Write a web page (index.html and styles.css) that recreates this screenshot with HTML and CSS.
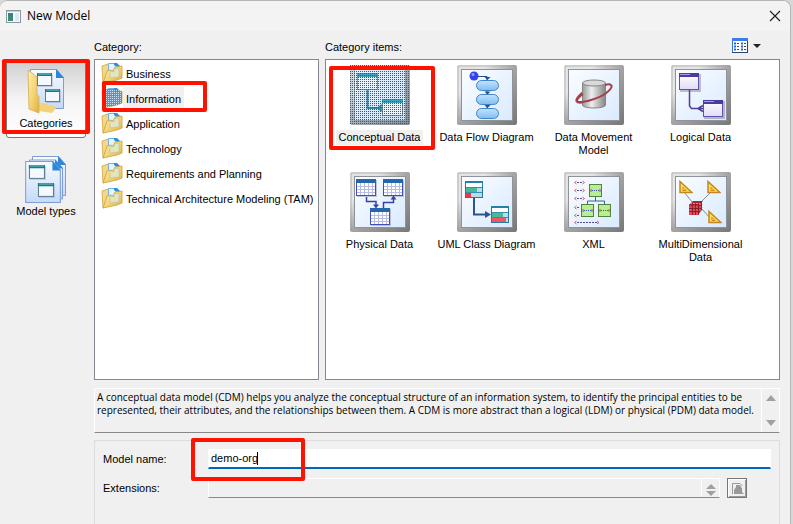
FILE: index.html
```html
<!DOCTYPE html>
<html lang="en">
<head>
<meta charset="utf-8">
<title>New Model</title>
<link rel="stylesheet" href="styles.css">
</head>
<body>
<svg class="defs" aria-hidden="true">
  <defs>
    <linearGradient id="bevel" x1="0" y1="0" x2="1" y2="1"><stop offset="0" stop-color="#e2e2e2"/><stop offset=".25" stop-color="#e6e6e6"/><stop offset=".5" stop-color="#a5a5a5"/><stop offset="1" stop-color="#777"/></linearGradient>
    <linearGradient id="sky" x1="0" y1="0" x2="1" y2="1"><stop offset="0" stop-color="#fbfdff"/><stop offset="1" stop-color="#d9eaff"/></linearGradient>
    <linearGradient id="gold" x1="0" y1="0" x2="1" y2="1"><stop offset="0" stop-color="#fff0ac"/><stop offset=".5" stop-color="#f5d677"/><stop offset="1" stop-color="#dfae42"/></linearGradient>
    <linearGradient id="page" x1="0" y1="0" x2="0" y2="1"><stop offset="0" stop-color="#f8fbff"/><stop offset="1" stop-color="#c5daf8"/></linearGradient>
    <linearGradient id="steel" x1="0" x2="1"><stop offset="0" stop-color="#9a9a9a"/><stop offset=".4" stop-color="#eee"/><stop offset="1" stop-color="#858585"/></linearGradient>
    <linearGradient id="pill" x1="0" y1="0" x2="0" y2="1"><stop offset="0" stop-color="#c2e4ff"/><stop offset="1" stop-color="#80bdf2"/></linearGradient>
    <linearGradient id="lilac" x1="0" y1="0" x2="0" y2="1"><stop offset="0" stop-color="#fff"/><stop offset="1" stop-color="#e2dcf8"/></linearGradient>
    <pattern id="dots" width="2" height="2" patternUnits="userSpaceOnUse"><path d="M0 0h2v2H0z" fill="#a9d0ef" fill-opacity=".25"/><path d="M0 0h1v1H0z" fill="#0068bd"/></pattern>
    <pattern id="holes" width="2" height="2" patternUnits="userSpaceOnUse"><path d="M0 0h2v2H0z" fill="#2b8fe0" fill-opacity=".85"/><path d="M1 1h1v1H1z" fill="#fff" fill-opacity=".7"/></pattern>
    <symbol id="frame" viewBox="0 0 60 60">
      <rect width="60" height="60" rx="2" fill="url(#bevel)"/>
      <path d="M1 59V1h58" fill="none" stroke="#999" stroke-opacity=".6"/>
      <rect x="4.500" y="4.500" width="51" height="51" fill="url(#sky)" stroke="#8d9399"/>
    </symbol>
    <symbol id="folder" viewBox="0 0 22 22">
      <path d="M1 4l6-2 3 2v14l-8 3z" fill="#f3d888" stroke="#d0a342" stroke-width=".8"/>
      <path d="M7.500 1.500h8l3 3V14h-11z" fill="#e6f3ff" stroke="#6fb2e4"/>
      <path d="M13 1h3l3 3v4l-6-5z" fill="#2f8fd8"/>
      <path d="M9 8l3 1 2-4 7-1v12l-5 2-14 3 4-12z" fill="url(#gold)" stroke="#cda040" stroke-width=".8"/>
      <path d="M9 9l4 1v-3l5-1v9l-9 1z" fill="#dfe9cc" fill-opacity=".85" stroke="#b9bf94" stroke-width=".6"/>
    </symbol>
    <symbol id="mini" viewBox="0 0 16 14">
      <rect x="1" y="1" width="15" height="13" fill="#668" opacity=".25"/>
      <rect x=".5" y=".5" width="14" height="12" fill="#f4f8ff" stroke="#627f91"/>
      <path d="M0 0h15v3H0z" fill="#147b88"/><path d="M1 1h13" stroke="#72c8c8"/>
    </symbol>
    <symbol id="sheet" viewBox="0 0 34 40">
      <path d="M.5 .5h26l7 8v31H.5z" fill="url(#page)" stroke="#7e9cd6"/><path d="M26 0l8 9h-8z" fill="#2b87dc"/>
    </symbol>
    <symbol id="table" viewBox="0 0 21 18">
      <path d="M1 1h20v17H1z" fill="#668" opacity=".35"/>
      <rect x=".5" y=".5" width="19" height="16" fill="#fff" stroke="#4050b4"/><path d="M0 0h20v4H0z" fill="#2366ad"/>
      <path d="M4.500 4v12M8.500 4v12M12.500 4v12M16.500 4v12M1 7.500h18M1 10.500h18M1 13.500h18" stroke="#b7bce9"/>
    </symbol>
    <symbol id="ruler" viewBox="0 0 14 13"><path d="M1 1v11h12z" fill="#ffdc45" stroke="#c28623" stroke-width="1.500"/><path d="M4 7v3h3z" fill="#fff7ce" stroke="#c28623"/></symbol>
  </defs>
</svg>

<main class="dialog">
  <header class="titlebar">
    <svg class="app-icon" viewBox="0 0 15 13"><rect x=".5" y=".5" width="14" height="12" fill="#f7fafc" stroke="#8d989e"/><path d="M1 1h13v1H1z" fill="#c4d0d6"/><path d="M2 3h5v8H2z" fill="#37808a"/><path d="M2 6h4v5H2z" fill="#36906a"/><path d="M9 3h4v8H9z" fill="#dce7f2"/></svg>
    <h1>New Model</h1>
    <button class="close" aria-label="Close"><svg viewBox="0 0 12 12"><path d="M1 1l10 10M11 1L1 11" stroke="#222" stroke-width="1.200"/></svg></button>
  </header>

  <div class="body">
    <nav class="modes">
      <button class="mode selected">
        <svg viewBox="0 0 42 48">
          <use href="#sheet" x="5" y="1" width="34" height="40"/>
          <path d="M13 34l19 5-5 6-20-3z" fill="#f2d27a"/><path d="M3 2l9 7v17l2 3v16L4 41z" fill="url(#gold)" stroke="#dbb965"/>
          <use href="#mini" x="12" y="5" width="16" height="14"/><use href="#mini" x="20" y="21" width="16" height="14"/>
        </svg>
        <span>Categories</span>
      </button>
      <span class="mark mark-mode"></span>
      <button class="mode">
        <svg viewBox="0 0 42 48">
          <use href="#sheet" x="7" y="0" width="34" height="40"/><use href="#sheet" x="4" y="3" width="34" height="41"/><use href="#sheet" x="0" y="5" width="36" height="42"/>
          <use href="#mini" x="3" y="9" width="19" height="15"/><use href="#mini" x="12" y="27" width="19" height="15"/>
        </svg>
        <span>Model types</span>
      </button>
    </nav>

    <div class="content">
      <div class="panes">
        <section class="pane categories">
          <h2>Category:</h2>
          <ul class="box list">
            <li><svg viewBox="0 0 22 22"><use href="#folder"/></svg><span>Business</span></li>
            <li class="current"><svg viewBox="0 0 22 22"><use href="#folder"/><path d="M1 4l6-2h8l6 3v11l-5 2-14 3z" fill="url(#holes)"/></svg><span>Information</span><i class="mark mark-category"></i></li>
            <li><svg viewBox="0 0 22 22"><use href="#folder"/></svg><span>Application</span></li>
            <li><svg viewBox="0 0 22 22"><use href="#folder"/></svg><span>Technology</span></li>
            <li><svg viewBox="0 0 22 22"><use href="#folder"/></svg><span>Requirements and Planning</span></li>
            <li><svg viewBox="0 0 22 22"><use href="#folder"/></svg><span>Technical Architecture Modeling (TAM)</span></li>
          </ul>
        </section>

        <section class="pane items">
          <div class="items-head">
            <h2>Category items:</h2>
            <button class="view" aria-label="View"><svg viewBox="0 0 29 15"><rect x=".5" y=".5" width="15" height="14" fill="#fff" stroke="#3475c8"/><path d="M0 0h16v3H0z" fill="#3e7be8"/><path d="M15.500 3v11.500H0" fill="none" stroke="#27466d"/><path d="M2 5.500h2M2 8.500h2M2 11.500h2M9 5.500h2M9 8.500h2M9 11.500h2" stroke="#2864d2" stroke-width="2"/><path d="M5 5.500h2M5 8.500h2M5 11.500h2M12 5.500h2M12 8.500h2M12 11.500h2" stroke="#445"/><path d="M21 6h8l-4 4z" fill="#222"/></svg></button>
          </div>
          <ul class="box grid">
            <li class="current">
              <svg viewBox="0 0 60 60"><use href="#frame"/>
                <g fill="#fff" stroke="#7a8078"><rect x="7.500" y="8.500" width="20" height="16"/><rect x="32.500" y="34.500" width="20" height="16"/></g>
                <path d="M7 8h21v4H7zM32 34h21v4H32z" fill="#1e93ad"/><path d="M17.500 25v18H32M28 43l4-3M28 43l4 3" fill="none" stroke="#136d94" stroke-width="2"/>
                <rect width="60" height="60" fill="url(#dots)"/></svg>
              <span>Conceptual Data</span><i class="mark mark-item"></i>
            </li>
            <li>
              <svg viewBox="0 0 60 60"><use href="#frame"/>
                <path d="M17 11.500h13V53" fill="none" stroke="#264f94"/><path d="M27.500 12l3 3 3-3zM27.500 26.500l3 3 3-3zM27.500 40l3 3 3-3z" fill="#264f94"/><circle cx="17" cy="11" r="4.500" fill="#3442ef"/><circle cx="16" cy="9.500" r="1.500" fill="#8aa3ff"/>
                <g fill="url(#pill)" stroke="#4385c2"><rect x="19.500" y="15.500" width="22" height="10" rx="5"/><rect x="19.500" y="29.500" width="22" height="10" rx="5"/><rect x="19.500" y="43.500" width="22" height="10" rx="5"/></g></svg>
              <span>Data Flow Diagram</span>
            </li>
            <li>
              <svg viewBox="0 0 60 60"><use href="#frame"/>
                <path d="M19 27c-14 12-4 13 11 7" fill="none" stroke="#ad4651" stroke-width="2"/><path d="M18.500 18v22c0 4 23 4 23 0V18" fill="url(#steel)" stroke="#858585"/><ellipse cx="30" cy="18" rx="11.500" ry="3" fill="#d9d9d9" stroke="#858585"/>
                <path d="M19 29c-11 8-6 10 8 6 15-4 23-13 20-15-1-1-3-1-6 0" fill="none" stroke="#a73e4b" stroke-width="2"/></svg>
              <span>Data Movement Model</span>
            </li>
            <li>
              <svg viewBox="0 0 60 60"><use href="#frame"/>
                <path d="M9 9h21v18H9zM33 36h21v18H33z" fill="#668" opacity=".4"/><g fill="url(#lilac)" stroke="#6350ad"><rect x="8.500" y="8.500" width="19" height="16"/><rect x="32.500" y="35.500" width="19" height="16"/></g>
                <path d="M8 8h20v4H8zM32 35h20v4H32z" fill="#4c3b9e"/><path d="M9 9.500h10M33 36.500h10" stroke="#aaa0e0"/><path d="M18.500 25v16l2 2.500H32M27 43.500l5-3M27 43.500l5 3" fill="none" stroke="#4e4096" stroke-width="1.500"/></svg>
              <span>Logical Data</span>
            </li>
            <li>
              <svg viewBox="0 0 60 60"><use href="#frame"/>
                <use href="#table" x="6" y="7" width="21" height="18"/><use href="#table" x="33" y="7" width="21" height="18"/><use href="#table" x="20" y="36" width="21" height="18"/>
                <path d="M16.500 25v4.500H26V34M33.500 36v-5.500H43.500V27" fill="none" stroke="#3442aa" stroke-width="1.500"/><path d="M23 32.500h6l-3 4zM40.500 27.500h6l-3-4z" fill="#3442aa"/></svg>
              <span>Physical Data</span>
            </li>
            <li>
              <svg viewBox="0 0 60 60"><use href="#frame"/>
                <g id="uml"><rect x="8.500" y="9.500" width="17" height="16" fill="#b7dbef" stroke="#267aa2"/><path d="M8 9h18v2H8z" fill="#2580aa"/><path d="M9 11h16v4H9z" fill="#fff"/><path d="M9 16h11v4H9z" fill="#48b999"/><path d="M9 21h5v4H9z" fill="#ef3545"/><path d="M9 15.500h16M9 20.500h16" stroke="#398ead"/></g>
                <use href="#uml" x="26" y="25"/><path d="M35 46h14v4H35z" fill="#f25660"/><path d="M17 26v16.500h13" fill="none" stroke="#2c548d" stroke-width="2"/><path d="M28 39l6 3.500-6 3.500z" fill="#2c548d"/></svg>
              <span>UML Class Diagram</span>
            </li>
            <li>
              <svg viewBox="0 0 60 60"><use href="#frame"/>
                <path d="M13 10.500h6M13 18.500h6M13 26.500h6M13 35.500h2M13 43.500h2M13 50.500h20" stroke="#4b4b98" stroke-dasharray="2 1"/>
                <path d="M12.500 9l-2 1.500 2 1.500M18.500 9l2 1.500-2 1.500M12.500 17l-2 1.500 2 1.500M18.500 17l2 1.500-2 1.500M12.500 25l-2 1.500 2 1.500M18.500 25l2 1.500-2 1.500M12.500 34l-2 1.500 2 1.500M12.500 42l-2 1.500 2 1.500M12.500 49l-2 1.500 2 1.500M33 49l2 1.500-2 1.500" fill="none" stroke="#c75c6c"/>
                <path d="M31.500 24v5M23.500 32v-3h17v3" fill="none" stroke="#2d6692"/><g fill="#b6ef93" stroke="#55833e"><rect x="25.500" y="12.500" width="12" height="12"/><rect x="17.500" y="32.500" width="12" height="12"/><rect x="34.500" y="32.500" width="12" height="12"/></g><path d="M28 18.500h7M20 38.500h7M37 38.500h7" stroke="#3e529b" stroke-dasharray="1 1"/><path d="M27 17v3M36 17v3M19 37v3M28 37v3M36 37v3M45 37v3" stroke="#b6444b"/></svg>
              <span>XML</span>
            </li>
            <li>
              <svg viewBox="0 0 60 60"><use href="#frame"/>
                <path d="M13 20l9 11M41 19L28 32M30 36l10 11" stroke="#858c91"/><use href="#ruler" x="8" y="8" width="14" height="14"/><use href="#ruler" x="36" y="8" width="14" height="14"/><use href="#ruler" x="37" y="38" width="14" height="14"/>
                <path d="M18 33l4-4h9v9l-4 5h-9z" fill="#aa2631"/><path d="M18 33h9v10h-9z" fill="#e14a54"/><path d="M21.500 33v10M24.500 33v10M18 36.500h9l4-4M18 39.500h9l4-4M27.500 43V33l4-4M18 33h9" fill="none" stroke="#7b1822" stroke-width=".8"/><path d="M19 31.500h10M29 31v9" stroke="#ee8a8a" stroke-dasharray="2 1"/></svg>
              <span>MultiDimensional Data</span>
            </li>
          </ul>
        </section>
      </div>

      <section class="description">
        <p>A conceptual data model (CDM) helps you analyze the conceptual structure of an information system, to identify the principal entities to be represented, their attributes, and the relationships between them. A CDM is more abstract than a logical (LDM) or physical (PDM) data model.</p>
        <div class="scroll"><i class="up"></i><i class="down"></i></div>
      </section>

      <form class="fields">
        <div class="row">
          <label for="name">Model name:</label>
          <div class="field name"><input id="name" value="demo-org"><i class="caret"></i><i class="mark mark-name"></i></div>
        </div>
        <div class="row">
          <label for="ext">Extensions:</label>
          <div class="field ext"><input id="ext" readonly><div class="scroll"><i class="up"></i><i class="down"></i></div></div>
          <button type="button" class="pick" aria-label="Select extensions"><svg viewBox="0 0 13 13"><path d="M1.500 12V1.500H9L11.500 4" fill="none" stroke="#999"/><path d="M3 12V8l2-3V3h4l1 2 1 1v4l2 2z" fill="#999"/></svg></button>
        </div>
      </form>
    </div>
  </div>
</main>
</body>
</html>
```
FILE: styles.css
```css
* { box-sizing: border-box; }
html { height: 100%; background: #d8d8d8; }
body { margin: 0; min-height: 100%; display: flex; font: 11px/13px "Liberation Sans", Arial, sans-serif; color: #000; }
h1, h2, p, ul { margin: 0; padding: 0; font-size: inherit; font-weight: normal; }
ul { list-style: none; }
button { padding: 0; border: 0; background: none; font: inherit; color: inherit; }
input { min-width: 0; font: inherit; border: 0; border-radius: 0; background: none; outline: 0; }
svg { display: block; flex: none; }
.defs { position: absolute; width: 0; height: 0; }

.dialog { flex: 1; min-height: 100vh; display: flex; flex-direction: column; margin-right: 2px; background: #f0f0f0; border: solid #b5b5b5; border-width: 1px 1px 0 0; border-radius: 8px 8px 0 0; overflow: hidden; }
.titlebar { height: 30px; display: flex; align-items: center; gap: 6px; padding: 0 9px 0 6px; background: #f3f3f3; }
.titlebar h1 { flex: 1; font: 12px/16px "Open Sans", sans-serif; }
.app-icon { width: 15px; height: 13px; }
.close svg { width: 12px; height: 12px; }

.body { flex: 1; display: flex; }
.modes { position: relative; width: 94px; flex: none; padding: 29px 8px 0 6px; }
.mode { width: 80px; height: 78px; display: flex; flex-direction: column; align-items: center; padding-top: 7px; gap: 1px; }
.mode svg { width: 42px; height: 48px; }
.mode.selected { border: 1px solid #777; border-radius: 3px; background: linear-gradient(#cfcfcf, #f4f4f4 50%, #fff); }
.mode + .mark + .mode { margin-top: 11px; }

.content { flex: 1; min-width: 0; display: flex; flex-direction: column; padding: 10px 10px 0 0; }
.panes { display: flex; gap: 6px; }
.pane { display: flex; flex-direction: column; }
.categories { width: 225px; }
.items { flex: 1; min-width: 0; }
h2 { height: 18px; }
.items-head { position: relative; }
.view { position: absolute; top: -3px; right: 19px; }
.view svg { width: 29px; height: 15px; }
.box { height: 321px; background: #fff; border: 1px solid #828790; }
.list { padding: 2px 6px; }
.list li { position: relative; height: 25px; display: flex; align-items: center; }
.list svg { width: 22px; height: 22px; margin-bottom: 4px; }
.list span { padding: 6px 3px; white-space: nowrap; }
.list .current span { background: #f0f0f0; }
.grid { display: grid; grid-template-columns: repeat(4, 107px); grid-auto-rows: 107px; padding: 5px 0 0; }
.grid li { position: relative; display: flex; flex-direction: column; align-items: center; text-align: center; }
.grid svg { width: 60px; height: 60px; }
.grid span { max-width: 107px; margin-top: 5px; padding: 1px 3px; }
.grid .current span { background: #f0f0f0; }

.description { height: 45px; display: flex; margin-top: 8px; border: 1px solid #fff; border-bottom-color: #888; }
.description p { flex: 1; padding: 2px 0 0 2px; font-size: 10px; font-family: "Open Sans", sans-serif; }
.scroll { width: 18px; flex: none; display: flex; flex-direction: column; align-items: center; justify-content: space-between; padding: 6px 0; border-left: 1px solid #fff; }
.up, .down { border: 5px solid transparent; border-top: 0; border-bottom: 6px solid #a0a0a0; }
.down { border-bottom: 0; border-top: 6px solid #a0a0a0; }

.fields { flex: 1; display: flex; flex-direction: column; gap: 9px; padding: 8px; margin-top: 7px; border: 1px solid #dcdcdc; border-bottom: 0; }
.row { display: flex; height: 20px; }
.row label { width: 105px; flex: none; line-height: 20px; }
.field { position: relative; flex: 1; min-width: 0; display: flex; border: 1px solid #fff; border-bottom-color: #888; }
.field input { flex: 1; width: 100%; padding: 0 2px; }
.field.name { background: #fff; border-bottom: 2px solid #0067c0; }
.caret { position: absolute; left: 48px; top: 2px; width: 1px; height: 13px; background: #000; }
.field .scroll { padding: 5px 0 1px; }
.field .up { border-bottom-width: 5px; }
.field .down { border-top-width: 5px; }
.pick { width: 20px; display: grid; place-items: center; margin: 0 24px 0 7px; border: 1px solid #777; box-shadow: inset 1px 1px #fff, inset -1px -1px #999; }
.pick svg { width: 13px; height: 13px; }

.mark { position: absolute; z-index: 1; border: 4px solid #ff1200; border-radius: 2px; pointer-events: none; }
.mark-mode { left: 2px; top: 28px; width: 88px; height: 75px; }
.mark-category { left: 1px; top: -6px; width: 105px; height: 31px; }
.mark-item { left: 3px; top: 1px; width: 106px; height: 84px; }
.mark-name { left: -18px; top: -12px; width: 114px; height: 43px; }
```
